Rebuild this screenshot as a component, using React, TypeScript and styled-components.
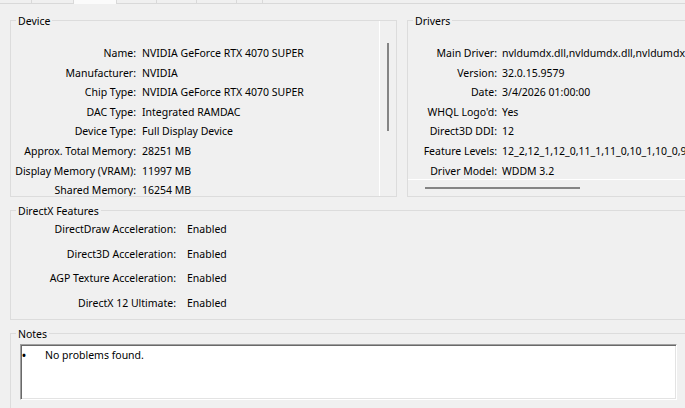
import styled, { createGlobalStyle } from "styled-components";

type Field = { label: string; value: string };

const deviceFields: Field[] = [
  { label: "Name:", value: "NVIDIA GeForce RTX 4070 SUPER" },
  { label: "Manufacturer:", value: "NVIDIA" },
  { label: "Chip Type:", value: "NVIDIA GeForce RTX 4070 SUPER" },
  { label: "DAC Type:", value: "Integrated RAMDAC" },
  { label: "Device Type:", value: "Full Display Device" },
  { label: "Approx. Total Memory:", value: "28251 MB" },
  { label: "Display Memory (VRAM):", value: "11997 MB" },
  { label: "Shared Memory:", value: "16254 MB" },
];

const driverFields: Field[] = [
  { label: "Main Driver:", value: "nvldumdx.dll,nvldumdx.dll,nvldumdx.dll,nvldumdx.dll" },
  { label: "Version:", value: "32.0.15.9579" },
  { label: "Date:", value: "3/4/2026 01:00:00" },
  { label: "WHQL Logo'd:", value: "Yes" },
  { label: "Direct3D DDI:", value: "12" },
  { label: "Feature Levels:", value: "12_2,12_1,12_0,11_1,11_0,10_1,10_0,9_3,9_2,9_1" },
  { label: "Driver Model:", value: "WDDM 3.2" },
];

const featureFields: Field[] = [
  { label: "DirectDraw Acceleration:", value: "Enabled" },
  { label: "Direct3D Acceleration:", value: "Enabled" },
  { label: "AGP Texture Acceleration:", value: "Enabled" },
  { label: "DirectX 12 Ultimate:", value: "Enabled" },
];

const tabWidths = [32, 42, 43, 40, 40, 40, 26];
const SELECTED_TAB = 2;

const GlobalStyle = createGlobalStyle`
  body {
    margin: 0;
    background: #f0f0f0;
    font-family: "Noto Sans", "Liberation Sans", sans-serif;
    font-size: 10.5px;
    color: #000;
  }
`;

const Page = styled.div`
  width: 685px;
  height: 408px;
  overflow: hidden;
  background: #f0f0f0;
`;

const TabStrip = styled.div`
  display: flex;
  height: 3px;
  border-bottom: 1px solid #d9d9d9;
`;

const Tab = styled.div<{ $selected: boolean }>`
  flex: none;
  box-sizing: border-box;
  border-right: 1px solid #d9d9d9;
  background: ${({ $selected }) => ($selected ? "#fbfbfb" : "#f0f0f0")};
  height: ${({ $selected }) => ($selected ? "4px" : "3px")};
`;

const Content = styled.div`
  width: 678px;
  padding-left: 10px;
  display: flex;
  flex-direction: column;
`;

const TopRow = styled.div`
  display: flex;
  gap: 10px;
  margin-top: 16px;
`;

const GroupBox = styled.div<{ $width: number; $height: number }>`
  position: relative;
  flex: none;
  box-sizing: border-box;
  border: 1px solid #dcdcdc;
  width: ${({ $width }) => $width}px;
  height: ${({ $height }) => $height}px;
`;

const Caption = styled.div`
  position: absolute;
  top: -7px;
  left: 5px;
  padding: 0 2px;
  line-height: 14px;
  background: #f0f0f0;
`;

const SideScroll = styled.div`
  display: flex;
  height: 100%;
`;

const StackScroll = styled.div`
  display: flex;
  flex-direction: column;
  height: 100%;
`;

const FieldList = styled.div<{ $top: number }>`
  flex: 1;
  min-width: 0;
  overflow: hidden;
  padding-top: ${({ $top }) => $top}px;
`;

const FieldRow = styled.div<{ $label: number; $gap: number; $pitch: number }>`
  display: grid;
  grid-template-columns: ${({ $label }) => $label}px auto;
  column-gap: ${({ $gap }) => $gap}px;
  height: ${({ $pitch }) => $pitch}px;
  line-height: ${({ $pitch }) => $pitch}px;
  white-space: nowrap;
`;

const Label = styled.span`
  text-align: right;
`;

const Value = styled.span``;

const VTrack = styled.div`
  flex: none;
  width: 16px;
  border-left: 1px solid #ffffff;
  display: flex;
  justify-content: center;
  padding-top: 22px;
`;

const VThumb = styled.div`
  width: 2px;
  height: 88px;
  background: #858585;
`;

const HTrack = styled.div`
  flex: none;
  height: 16px;
  border-top: 1px solid #ffffff;
  display: flex;
  align-items: center;
  padding-left: 17px;
`;

const HThumb = styled.div`
  width: 155px;
  height: 2px;
  background: #858585;
`;

const Section = styled(GroupBox)`
  margin-top: 13px;
`;

const NoteBox = styled.div`
  margin: 10px 10px 0 9px;
  height: 56px;
  box-sizing: border-box;
  background: #fff;
  border: 1px solid;
  border-color: #a0a0a0 #ffffff #ffffff #a0a0a0;
  box-shadow: inset 1px 1px 0 #696969, inset -1px -1px 0 #e3e3e3;
  padding: 2px 0 0 0;
`;

const NoteLine = styled.div`
  display: flex;
  line-height: 16px;
`;

const Bullet = styled.span`
  width: 23px;
  padding-left: 1px;
  flex: none;
  font-weight: 700;
`;

const renderFields = (fields: Field[], label: number, gap: number, pitch: number) =>
  fields.map((f) => (
    <FieldRow key={f.label} $label={label} $gap={gap} $pitch={pitch}>
      <Label>{f.label}</Label>
      <Value>{f.value}</Value>
    </FieldRow>
  ));

export default function App() {
  return (
    <Page>
      <GlobalStyle />
      <TabStrip>
        {tabWidths.map((w, i) => (
          <Tab key={i} $selected={i === SELECTED_TAB} style={{ width: w }} />
        ))}
      </TabStrip>

      <Content>
        <TopRow>
          <GroupBox $width={387} $height={177}>
            <Caption>Device</Caption>
            <SideScroll>
              <FieldList $top={23}>{renderFields(deviceFields, 125, 6, 19.6)}</FieldList>
              <VTrack>
                <VThumb />
              </VTrack>
            </SideScroll>
          </GroupBox>

          <GroupBox $width={281} $height={177}>
            <Caption>Drivers</Caption>
            <StackScroll>
              <FieldList $top={23}>{renderFields(driverFields, 89, 5, 19.6)}</FieldList>
              <HTrack>
                <HThumb />
              </HTrack>
            </StackScroll>
          </GroupBox>
        </TopRow>

        <Section $width={678} $height={110}>
          <Caption>DirectX Features</Caption>
          <FieldList $top={6}>{renderFields(featureFields, 165, 11, 24.6)}</FieldList>
        </Section>

        <Section $width={678} $height={90}>
          <Caption>Notes</Caption>
          <NoteBox>
            <NoteLine>
              <Bullet>•</Bullet>
              <span>No problems found.</span>
            </NoteLine>
          </NoteBox>
        </Section>
      </Content>
    </Page>
  );
}
